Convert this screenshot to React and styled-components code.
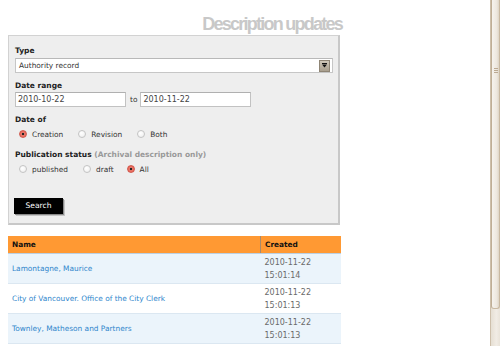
import React from 'react';
import styled, { createGlobalStyle } from 'styled-components';

const Global = createGlobalStyle`
  html, body { margin: 0; padding: 0; background: #fff; }
  body { font-family: "DejaVu Sans", Verdana, sans-serif; color: #000; }
`;

const Page = styled.div`
  display: flex;
  height: 346px;
  overflow: hidden;
`;

const Main = styled.main`
  flex: 1;
  padding-left: 8px;
`;

const Column = styled.div`
  width: 334px;
`;

const Title = styled.h1`
  margin: 14px 0 0;
  height: 21px;
  line-height: 20px;
  font-family: "Liberation Sans", Arial, sans-serif;
  font-weight: bold;
  font-size: 18px;
  letter-spacing: -1.75px;
  color: #c8c8c8;
  text-align: right;
`;

const Panel = styled.form`
  box-sizing: border-box;
  width: 332px;
  background: #eeeeee;
  border: 1px solid #d2d2d2;
  border-right: 2px solid #c8c8c8;
  border-bottom: 2px solid #c8c8c8;
  padding: 10px 5px 9px 6px;
  display: flex;
  flex-direction: column;
`;

const Label = styled.div`
  font-size: 7.5px;
  font-weight: bold;
  line-height: 10px;
  height: 10px;
  margin-top: ${p => p.$top || 0}px;
  color: #222;
`;

const Hint = styled.span`
  color: #999;
`;

const SelectBox = styled.div`
  box-sizing: border-box;
  margin-top: 2px;
  height: 15px;
  width: 318px;
  background: #fff;
  border: 1px solid #c6c6c6;
  border-top-color: #b8b8b8;
  display: flex;
  align-items: center;
  padding-left: 3px;
  font-size: 7.4px;
  color: #333;
`;

const SelectText = styled.span`
  flex: 1;
`;

const ArrowBtn = styled.span`
  box-sizing: border-box;
  width: 11px;
  height: 12px;
  margin-right: 2px;
  background: linear-gradient(#cfc7b9, #a99f8e);
  border: 1px solid #8f8575;
  display: flex;
  align-items: center;
  justify-content: center;
`;

const DateRow = styled.div`
  margin-top: 1px;
  display: flex;
  align-items: center;
`;

const TextInput = styled.div`
  box-sizing: border-box;
  width: 111px;
  height: 15px;
  background: #fff;
  border: 1px solid #c2c2c2;
  border-top-color: #b0b0b0;
  font-size: 8px;
  line-height: 13px;
  padding-left: 2px;
  color: #444;
`;

const To = styled.span`
  font-size: 7.4px;
  color: #333;
  margin: 0 3px 0 4px;
`;

const RadioRow = styled.div`
  margin-top: 3px;
  height: 12px;
  display: flex;
  align-items: center;
  padding-left: 4px;
`;

const Option = styled.label`
  display: flex;
  align-items: center;
  font-size: 7.4px;
  color: #333;
  margin-right: ${p => p.$gap}px;
`;

const Radio = styled.span`
  box-sizing: border-box;
  width: 8px;
  height: 8px;
  border-radius: 50%;
  margin-right: 5px;
  border: 1px solid ${p => (p.$on ? '#d0584c' : '#c4c4c4')};
  background: ${p =>
    p.$on
      ? 'radial-gradient(circle at 50% 50%, #222 0 1.3px, #f07a6c 1.6px, #e0564a 100%)'
      : 'radial-gradient(circle at 40% 35%, #ffffff, #ececec)'};
`;

const SearchButton = styled.button`
  box-sizing: border-box;
  margin-top: 23px;
  align-self: flex-start;
  margin-left: -1px;
  width: 49px;
  height: 16px;
  padding: 0;
  background: #000;
  color: #fff;
  border: none;
  box-shadow: 1px 1px 0 #8a8a8a, 2px 2px 0 #c4c4c4;
  font-family: "DejaVu Sans", Verdana, sans-serif;
  font-size: 7.6px;
  line-height: 16px;
`;

const Table = styled.table`
  margin-top: 11px;
  width: 333px;
  border-collapse: collapse;
  font-size: 7.4px;
`;

const Th = styled.th`
  background: #ff9933;
  height: 17px;
  padding: 0 0 0 4px;
  text-align: left;
  font-weight: bold;
  color: #111;
  border-bottom: 1px solid #bcd0e2;
  border-left: ${p => (p.$divider ? '1px solid #a88a6c' : 'none')};
  width: ${p => p.$w || 'auto'};
`;

const Tr = styled.tr`
  background: ${p => (p.$alt ? '#ffffff' : '#ebf4fb')};
  border-bottom: 1px solid #dbe7f1;
`;

const Td = styled.td`
  height: 30px;
  padding: 0 0 0 4px;
  vertical-align: middle;
  box-sizing: border-box;
`;

const NameLink = styled.a`
  color: #2f86cc;
  text-decoration: none;
`;

const DateCell = styled.div`
  font-size: 8px;
  line-height: 13px;
  color: #6a6a6a;
  padding-top: 1px;
`;

const Scrollbar = styled.div`
  width: 10px;
  height: 346px;
  box-sizing: border-box;
  background: linear-gradient(90deg, #e6dfd3, #f1ece5 60%, #e9e3d9);
  border-left: 1px solid #cdbfab;
  display: flex;
  flex-direction: column;
`;

const Thumb = styled.div`
  box-sizing: border-box;
  height: 309px;
  background: linear-gradient(90deg, #f6f3ee, #ede7de 70%, #ddd4c6);
  border: 1px solid #c9b9a2;
  border-top: none;
  border-left-color: #bfae96;
  border-radius: 0 0 3px 3px;
  display: flex;
  flex-direction: column;
  align-items: center;
  padding-top: 68px;
`;

const Grip = styled.span`
  width: 4px;
  height: 1px;
  margin-bottom: 1px;
  background: #bba992;
`;

const rows = [
  { name: 'Lamontagne, Maurice', date: '2010-11-22', time: '15:01:14' },
  { name: 'City of Vancouver. Office of the City Clerk', date: '2010-11-22', time: '15:01:13' },
  { name: 'Townley, Matheson and Partners', date: '2010-11-22', time: '15:01:13' },
];

export default function App() {
  return (
    <>
      <Global />
      <Page>
        <Main>
          <Column>
            <Title>Description updates</Title>
            <Panel onSubmit={e => e.preventDefault()}>
              <Label>Type</Label>
              <SelectBox>
                <SelectText>Authority record</SelectText>
                <ArrowBtn>
                  <svg width="5" height="5" viewBox="0 0 5 5">
                    <rect x="0" y="0" width="5" height="1" fill="#111" />
                    <path d="M0 1.5 H5 L2.5 4.5 Z" fill="#111" />
                  </svg>
                </ArrowBtn>
              </SelectBox>
              <Label $top={8}>Date range</Label>
              <DateRow>
                <TextInput>2010-10-22</TextInput>
                <To>to</To>
                <TextInput>2010-11-22</TextInput>
              </DateRow>
              <Label $top={8}>Date of</Label>
              <RadioRow>
                <Option $gap={15}><Radio $on />Creation</Option>
                <Option $gap={15}><Radio />Revision</Option>
                <Option $gap={15}><Radio />Both</Option>
              </RadioRow>
              <Label $top={10}>
                Publication status <Hint>(Archival description only)</Hint>
              </Label>
              <RadioRow>
                <Option $gap={15}><Radio />published</Option>
                <Option $gap={13}><Radio />draft</Option>
                <Option $gap={13}><Radio $on />All</Option>
              </RadioRow>
              <SearchButton type="submit">Search</SearchButton>
            </Panel>
            <Table>
              <thead>
                <tr>
                  <Th>Name</Th>
                  <Th $divider $w="76px">Created</Th>
                </tr>
              </thead>
              <tbody>
                {rows.map((r, i) => (
                  <Tr key={i} $alt={i % 2 === 1}>
                    <Td><NameLink href="#">{r.name}</NameLink></Td>
                    <Td>
                      <DateCell>{r.date}<br />{r.time}</DateCell>
                    </Td>
                  </Tr>
                ))}
              </tbody>
            </Table>
          </Column>
        </Main>
        <Scrollbar>
          <Thumb>
            <Grip /><Grip /><Grip />
          </Thumb>
        </Scrollbar>
      </Page>
    </>
  );
}
